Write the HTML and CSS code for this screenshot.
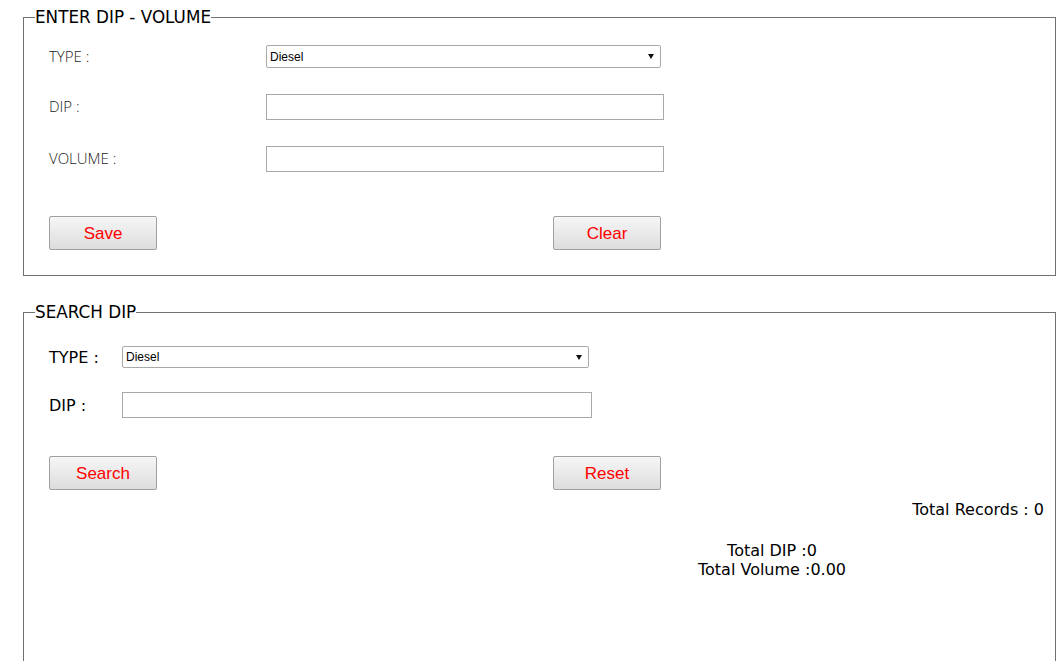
FILE: index.html
```html
<!DOCTYPE html>
<html lang="en">
<head>
  <meta charset="UTF-8" />
  <title>Dip Volume</title>
  <link rel="stylesheet" href="styles.css">
</head>
<body>
  <div class="page">
    <fieldset class="box box-entry">
      <legend>ENTER DIP - VOLUME</legend>
      <div class="form-grid">
        <label class="lbl-light">TYPE :</label>
        <span class="select-wrap wide">
          <select><option>Diesel</option><option>Petrol</option></select>
        </span>
        <label class="lbl-light">DIP :</label>
        <input type="text" class="txt wide-in" />
        <label class="lbl-light">VOLUME :</label>
        <input type="text" class="txt wide-in" />
      </div>
      <div class="btn-row">
        <button class="btn">Save</button>
        <button class="btn">Clear</button>
      </div>
    </fieldset>

    <fieldset class="box box-search">
      <legend>SEARCH DIP</legend>
      <div class="search-grid">
        <label class="lbl">TYPE :</label>
        <span class="select-wrap narrow">
          <select><option>Diesel</option><option>Petrol</option></select>
        </span>
        <label class="lbl">DIP :</label>
        <input type="text" class="txt narrow-in" />
      </div>
      <div class="btn-row search-btns">
        <button class="btn">Search</button>
        <button class="btn">Reset</button>
      </div>
      <div class="records">Total Records : 0</div>
      <div class="totals">
        <div>Total DIP :0</div>
        <div>Total Volume :0.00</div>
      </div>
    </fieldset>
  </div>
</body>
</html>
```

FILE: styles.css
```css
body {
  margin: 0;
  background: #fff;
  font-family: Tahoma, "DejaVu Sans", sans-serif;
  overflow: hidden;
}

.page {
  padding: 9px 1px 0 23px;
}

.box {
  margin: 0;
  min-width: 0;
  border: 1px solid #707070;
  padding: 0 25px;
}

.box legend {
  padding: 0;
  margin-left: -14px;
  font-size: 16.8px;
  color: #000;
  line-height: 17px;
}

.box-entry {
  height: 267px;
  box-sizing: border-box;
}

.box-search {
  margin-top: 28px;
  height: 380px;
  box-sizing: border-box;
}

.form-grid {
  display: grid;
  grid-template-columns: 217px 398px;
  grid-template-rows: 23px 26px 26px;
  row-gap: 26px;
  align-items: center;
  margin-top: 19px;
}

.lbl-light {
  font-family: "Open Sans", sans-serif;
  font-weight: 300;
  font-size: 15px;
  color: #222;
  margin-top: -2px;
}

.lbl {
  font-size: 16px;
  color: #000;
}

.select-wrap {
  position: relative;
  display: block;
  height: 23px;
}

.select-wrap.wide { width: 395px; }
.select-wrap.narrow { width: 467px; height: 22px; }

.select-wrap select {
  appearance: none;
  -webkit-appearance: none;
  display: block;
  width: 100%;
  height: 100%;
  border: 1px solid #a9a9a9;
  border-radius: 2px;
  background: #fff;
  font-family: "Liberation Sans", Arial, sans-serif;
  font-size: 12px;
  padding: 0 3px;
  color: #000;
}

.select-wrap::after {
  content: "";
  position: absolute;
  right: 7px;
  top: 9px;
  border-left: 3px solid transparent;
  border-right: 3px solid transparent;
  border-top: 5px solid #111;
  pointer-events: none;
}

.txt {
  height: 26px;
  box-sizing: border-box;
  border: 1px solid #a9a9a9;
  margin: 0;
  padding: 2px 4px;
  font-size: 13px;
}

.wide-in { width: 398px; }
.narrow-in { width: 470px; }

.btn-row {
  display: flex;
  gap: 396px;
  margin-top: 44px;
}

.btn {
  width: 108px;
  height: 34px;
  border: 1px solid #a0a0a0;
  border-radius: 2px;
  background: linear-gradient(#f6f6f6, #dddddd);
  color: #ff0000;
  font-family: "Liberation Sans", Arial, sans-serif;
  font-size: 17px;
  padding: 2px 0 0;
  cursor: pointer;
}

.search-grid {
  display: grid;
  grid-template-columns: 73px 470px;
  row-gap: 24px;
  align-items: center;
  margin-top: 25px;
}

.search-btns {
  margin-top: 38px;
}

.records {
  text-align: right;
  font-size: 16px;
  margin-top: 10px;
  margin-right: -14px;
}

.totals {
  text-align: center;
  font-size: 16px;
  line-height: 19px;
  margin-top: 22px;
  padding-left: 465px;
}
```
